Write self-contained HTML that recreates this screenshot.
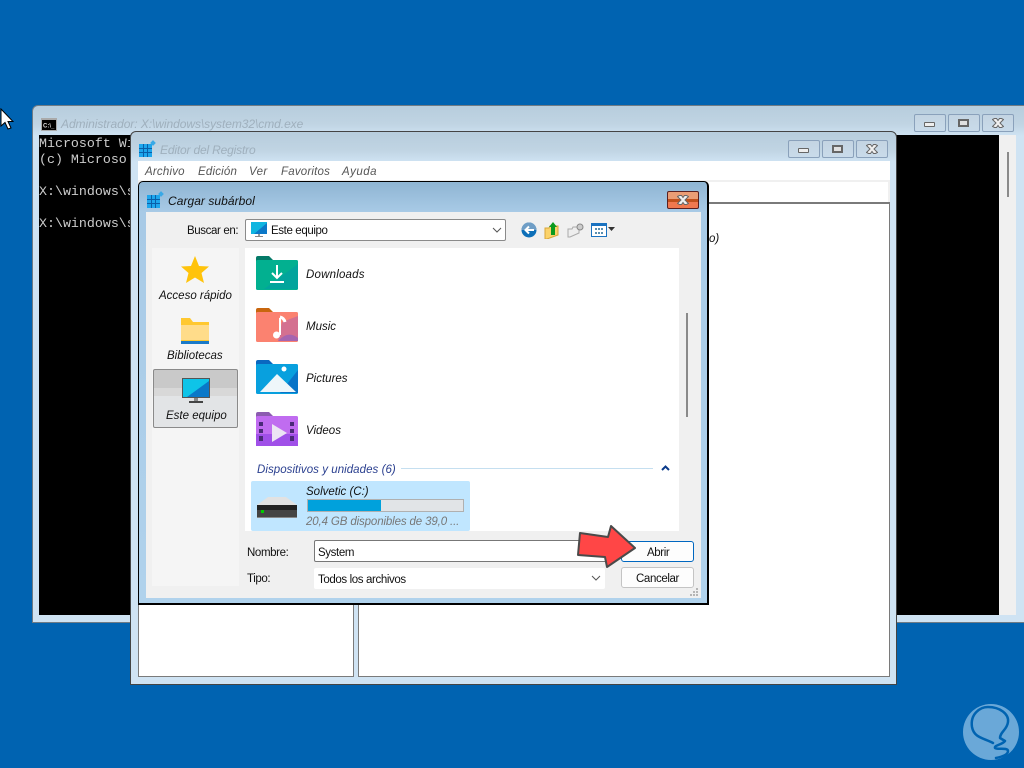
<!DOCTYPE html>
<html><head><meta charset="utf-8"><style>
html,body{margin:0;padding:0}
body{width:1024px;height:768px;overflow:hidden;position:relative;background:#0063b1;font-family:"Liberation Sans",sans-serif;font-size:11.5px;color:#111}
div,span,svg,b{position:absolute;box-sizing:border-box}
.t{white-space:nowrap;line-height:14px;margin-top:1px;letter-spacing:-.38px}
.i{font-style:italic;font-size:11.5px;letter-spacing:0}
.m{color:#555;letter-spacing:.2px}
.h{margin-top:0;font-size:12px}
.win{background:linear-gradient(#b7cddd 0,#c0d4e3 18px,#cfe3f3 30px,#cfe3f3 100%);border:1px solid #6f7b85;border-radius:6px 6px 0 0}
.cap{width:32px;height:18px;border:1px solid #8aa1bb;border-radius:2px;background:linear-gradient(#c3d4e2,#c9dbea)}
.cap span{left:9px;top:7px;width:11px;height:5px;background:#eee;border:1px solid #666;border-radius:1px}
.cap b{left:9px;top:4px;width:11px;height:8px;border:2px solid #666;background:#e0e0e0}
.x{left:9px;top:3px}
.mono{font-family:"Liberation Mono",monospace;font-size:13.3px;color:#ccc;line-height:16px;white-space:pre}
</style></head><body>
<!-- cursor -->
<svg style="left:0;top:108px" width="14" height="24" viewBox="0 0 14 24"><path d="M1 1V18L5 14.500L8 21L11 20L8 13.500H13Z" fill="#fff" stroke="#000"/></svg>

<!-- CMD -->
<div class="win" style="left:32px;top:105px;width:998px;height:518px"></div>
<svg style="left:41px;top:118px" width="16" height="13"><rect width="16" height="13" fill="#aaa"/><rect x="1" y="2" width="14" height="10" fill="#000"/><text x="2" y="9.500" font-family="Liberation Sans" font-size="6" font-weight="bold" fill="#ddd">C:\_</text></svg>
<div class="t i h" style="left:61px;top:117px;color:#9fb0bd;letter-spacing:-.06px">Administrador: X:\windows\system32\cmd.exe</div>
<div style="left:39px;top:135px;width:960px;height:480px;background:#000"></div>
<div style="left:999px;top:135px;width:17px;height:480px;background:#f0f0f0"></div>
<div style="left:1007px;top:152px;width:2px;height:45px;background:#8a8a8a"></div>
<div class="mono" style="left:39px;top:136px">Microsoft Wi
(c) Microso

X:\windows\s

X:\windows\s</div>
<div class="cap" style="left:914px;top:114px"><span></span></div>
<div class="cap" style="left:948px;top:114px"><b></b></div>
<div class="cap" style="left:982px;top:114px"><svg class="x" width="12" height="10"><path d="M.5 1.500L2.500.5H4.500L6 2.500L7.500.5H9.500L11.500 1.500L8 5L11.500 8.500L9.500 9.500H7.500L6 7.500L4.500 9.500H2.500L.5 8.500L4 5Z" fill="#f0f0f0" stroke="#666"/></svg></div>

<!-- Registry -->
<div class="win" style="left:130px;top:131px;width:767px;height:554px;border-color:#444"></div>
<svg style="left:139px;top:140px" width="17" height="17"><rect y="4" width="13" height="13" fill="#1ea6ec"/><path d="M0 8.500H13M0 12.500H13M4.500 4V17M8.500 4V17" stroke="#0a5fa8"/><rect x="12" y="1" width="4" height="4" fill="#39a9e6" transform="rotate(45 14 3)"/></svg>
<div class="t i h" style="left:160px;top:143px;color:#9fb0bd;letter-spacing:-.17px">Editor del Registro</div>
<div class="cap" style="left:788px;top:140px"><span></span></div>
<div class="cap" style="left:822px;top:140px"><b></b></div>
<div class="cap" style="left:856px;top:140px"><svg class="x" width="12" height="10"><path d="M.5 1.500L2.500.5H4.500L6 2.500L7.500.5H9.500L11.500 1.500L8 5L11.500 8.500L9.500 9.500H7.500L6 7.500L4.500 9.500H2.500L.5 8.500L4 5Z" fill="#f0f0f0" stroke="#666"/></svg></div>
<div style="left:138px;top:161px;width:752px;height:19px;background:#fff"></div>
<div class="t i m" style="left:145px;top:164px;letter-spacing:.2px">Archivo</div>
<div class="t i m" style="left:198px;top:164px">Edición</div>
<div class="t i m" style="left:249px;top:164px;letter-spacing:.35px">Ver</div>
<div class="t i m" style="left:281px;top:164px">Favoritos</div>
<div class="t i m" style="left:342px;top:164px;letter-spacing:.5px">Ayuda</div>
<div style="left:138px;top:180px;width:752px;height:22px;background:#fff;border:2px solid #f0f0f0;border-bottom:0"></div>
<div style="left:138px;top:202px;width:216px;height:475px;background:#fff;border:1px solid #7a7a7a"></div>
<div style="left:358px;top:202px;width:532px;height:475px;background:#fff;border:1px solid #7a7a7a;border-top-width:2px"></div>
<div class="t i" style="left:709px;top:231px">o)</div>

<!-- Dialog -->
<div style="left:138px;top:181px;width:571px;height:424px;background:linear-gradient(#8fb5d3 0,#a8cae6 30px,#b0d2ec 100%);border:1px solid #000;border-width:1px 2px 2px 1px;border-radius:5px 5px 0 0"></div>
<svg style="left:147px;top:191px" width="17" height="17"><rect y="4" width="13" height="13" fill="#1ea6ec"/><path d="M0 8.500H13M0 12.500H13M4.500 4V17M8.500 4V17" stroke="#0a5fa8"/><rect x="12" y="1" width="4" height="4" fill="#39a9e6" transform="rotate(45 14 3)"/></svg>
<div class="t i h" style="left:168px;top:194px;letter-spacing:.05px">Cargar subárbol</div>
<div style="left:667px;top:191px;width:32px;height:18px;border:1px solid #5a2020;border-radius:2px;background:linear-gradient(#ea9d75 0 7px,#c0501c 7px 10px,#f0784f 10px)"><svg class="x" style="left:9px;top:3px" width="12" height="10"><path d="M.5 1.500L2.500.5H4.500L6 2.500L7.500.5H9.500L11.500 1.500L8 5L11.500 8.500L9.500 9.500H7.500L6 7.500L4.500 9.500H2.500L.5 8.500L4 5Z" fill="#f0f0f0" stroke="#666"/></svg></div>
<div style="left:146px;top:212px;width:555px;height:386px;background:#f0f0f0"></div>

<div class="t" style="left:187px;top:223px">Buscar en:</div>
<div style="left:245px;top:219px;width:261px;height:22px;background:#fff;border:1px solid #8a8a8a;border-radius:2px"></div>
<svg style="left:251px;top:222px" width="17" height="17"><rect width="16" height="12" fill="#0fb5e0"/><path d="M16 1V12H3Z" fill="#0b78c8"/><rect x="7" y="12" width="2" height="2" fill="#999"/><rect x="4" y="14" width="8" height="1" fill="#888"/></svg>
<div class="t" style="left:271px;top:223px">Este equipo</div>
<svg style="left:492px;top:226px" width="10" height="8"><path d="M1 2L5 6L9 2" fill="none" stroke="#555"/></svg>
<svg style="left:521px;top:222px" width="16" height="16"><circle cx="8" cy="8" r="7.500" fill="#0d6fb8"/><path d="M0.500 8A7.500 7.500 0 0 1 15.500 8" fill="#6f9ec6"/><path d="M13 8H5M8 4.500L4.500 8L8 11.500" fill="none" stroke="#fff" stroke-width="2"/></svg>
<svg style="left:544px;top:221px" width="16" height="18"><path d="M1 7H5L6 5H14V14L3 18H1Z" fill="#fbd36b" stroke="#d9a63a"/><path d="M9 1L13 6H11V14H7V6H5Z" fill="#0a9a1e"/></svg>
<svg style="left:567px;top:223px" width="17" height="15"><path d="M1 6H5L6 4H12V10L3 14H1Z" fill="#eee" stroke="#aaa"/><circle cx="13" cy="4" r="3" fill="#ccc" stroke="#888"/></svg>
<svg style="left:591px;top:223px" width="26" height="15"><rect x=".5" y=".5" width="15" height="13" fill="#fff" stroke="#1a72c0"/><rect x="1" y="1" width="14" height="2" fill="#1a72c0"/><path d="M4 5h2v2H4zM7 5h2v2H7zM10 5h2v2h-2zM4 9h2v2H4zM7 9h2v2H7zM10 9h2v2h-2z" fill="#5a8fb0"/><path d="M17 4h7l-3.500 4z" fill="#333"/></svg>

<!-- places -->
<div style="left:152px;top:248px;width:87px;height:338px;background:#f5f5f5"></div>
<div style="left:153px;top:369px;width:85px;height:59px;border:1px solid #8a8a8a;border-radius:2px;background:linear-gradient(#c9c9c9 0 18px,#d8d8d8 18px 26px,#e2e4e6 26px)"></div>
<svg style="left:180px;top:255px" width="30" height="30"><path d="M15 1L19 11L29 11.500L21.500 18L24 28L15 22.500L6 28L8.500 18L1 11.500L11 11Z" fill="#ffc30b"/></svg>
<div class="t i" style="left:159px;top:288px">Acceso rápido</div>
<svg style="left:181px;top:318px" width="28" height="26"><path d="M0 0H9L12 4H28V26H0Z" fill="#ffc830"/><path d="M0 7H28V22H0Z" fill="#ffdc8a"/><path d="M0 23H28V26H0Z" fill="#1a7ac8"/></svg>
<div class="t i" style="left:167px;top:348px">Bibliotecas</div>
<svg style="left:182px;top:378px" width="28" height="26"><rect width="28" height="20" fill="#555"/><rect x="1" y="1" width="26" height="18" fill="#0ec4e8"/><path d="M27 3V19H5Z" fill="#0a78c8"/><rect x="12" y="20" width="4" height="3" fill="#888"/><rect x="7" y="23" width="14" height="2" fill="#444"/></svg>
<div class="t i" style="left:166px;top:408px">Este equipo</div>

<!-- list -->
<div style="left:245px;top:248px;width:434px;height:283px;background:#fff"></div>
<div style="left:686px;top:313px;width:2px;height:104px;background:#8a8a8a"></div>

<svg style="left:256px;top:256px" width="42" height="34"><path d="M0 2Q0 0 2 0H13L17 4H30V12H0Z" fill="#047a68"/><rect y="4" width="42" height="30" rx="1.500" fill="#02b090"/><path d="M42 8V33H8Z" fill="#02a49c"/><path d="M21 9V22M16 17L21 22L26 17M14 26H28" fill="none" stroke="#fff" stroke-width="2"/></svg>
<div class="t i" style="left:306px;top:267px;letter-spacing:.2px">Downloads</div>

<svg style="left:256px;top:308px" width="42" height="34"><path d="M0 2Q0 0 2 0H13L17 4H30V12H0Z" fill="#c8660e"/><rect y="4" width="42" height="30" rx="1.500" fill="#fb8270"/><path d="M42 8V33H22L26 14Z" fill="#d47090"/><path d="M22 33Q32 22 42 30V33Z" fill="#a565b0"/><path d="M24 10V27" stroke="#fff" stroke-width="2"/><path d="M24 9Q28 10 29 14" fill="none" stroke="#fff" stroke-width="3"/><circle cx="20.500" cy="27" r="3.500" fill="#fff"/></svg>
<div class="t i" style="left:306px;top:319px">Music</div>

<svg style="left:256px;top:360px" width="42" height="34"><path d="M0 2Q0 0 2 0H13L17 4H30V12H0Z" fill="#0a68c0"/><rect y="4" width="42" height="30" rx="1.500" fill="#08a0de"/><path d="M42 10V33H24Z" fill="#0874c8"/><path d="M4 32L21 14L40 32Z" fill="#eef6fa"/><circle cx="28" cy="9" r="2.500" fill="#fff"/></svg>
<div class="t i" style="left:306px;top:371px">Pictures</div>

<svg style="left:256px;top:412px" width="42" height="34"><path d="M0 2Q0 0 2 0H13L17 4H30V12H0Z" fill="#8c5cb0"/><rect y="4" width="42" height="30" rx="1.500" fill="#c06cf0"/><path d="M0 34V22H42V34Z" fill="#a050e8"/><path d="M16 12V30L31 21Z" fill="#ece4f4"/><path d="M3 10h4v4H3zM3 17h4v4H3zM3 24h4v5H3zM34 10h4v4h-4zM34 17h4v4h-4zM34 24h4v5h-4z" fill="#4a2a78"/></svg>
<div class="t i" style="left:306px;top:423px">Videos</div>

<div class="t i" style="left:257px;top:462px;color:#2a3f8f;letter-spacing:.05px">Dispositivos y unidades (6)</div>
<div style="left:401px;top:468px;width:252px;height:1px;background:#c5dff0"></div>
<svg style="left:661px;top:465px" width="9" height="7"><path d="M1 5L4.500 1.500L8 5" fill="none" stroke="#0a3a8a" stroke-width="2"/></svg>
<div style="left:251px;top:481px;width:219px;height:50px;background:#c0e6ff;border-radius:2px"></div>
<svg style="left:256px;top:495px" width="42" height="24"><path d="M1 10L12 2H30L41 10Z" fill="#e2e2e2"/><rect x="1" y="10" width="40" height="5" fill="#222"/><rect x="1" y="15" width="40" height="7" fill="#444"/><rect x="1" y="22" width="40" height="1" fill="#888"/><rect x="5" y="15" width="3" height="3" fill="#0c0"/></svg>
<div class="t i" style="left:306px;top:484px">Solvetic (C:)</div>
<div style="left:307px;top:499px;width:157px;height:13px;background:#e1e4e7;border:1px solid #b0b0b0"></div>
<div style="left:308px;top:500px;width:73px;height:11px;background:#00a1dc"></div>
<div class="t i" style="left:306px;top:514px;color:#777;letter-spacing:-.13px">20,4 GB disponibles de 39,0 ...</div>

<!-- bottom -->
<div class="t" style="left:247px;top:545px">Nombre:</div>
<div style="left:314px;top:540px;width:300px;height:22px;background:#fff;border:1px solid #777;border-radius:2px"></div>
<div class="t" style="left:318px;top:545px">System</div>
<div class="t" style="left:247px;top:571px">Tipo:</div>
<div style="left:314px;top:568px;width:291px;height:21px;background:#fff;border-radius:2px"></div>
<div class="t" style="left:318px;top:572px">Todos los archivos</div>
<svg style="left:591px;top:574px" width="10" height="8"><path d="M1 2L5 6L9 2" fill="none" stroke="#555"/></svg>
<div style="left:621px;top:541px;width:73px;height:21px;background:#fdfdfd;border:1px solid #0067c0;border-radius:3px"></div>
<div class="t" style="left:647px;top:545px">Abrir</div>
<div style="left:621px;top:567px;width:73px;height:21px;background:#fdfdfd;border:1px solid #c4c4c4;border-radius:3px"></div>
<div class="t" style="left:636px;top:571px">Cancelar</div>
<svg style="left:689px;top:587px" width="10" height="9"><path d="M7 1h2v2H7zM4 4h2v2H4zM7 4h2v2H7zM1 7h2v2H1zM4 7h2v2H4zM7 7h2v2H7z" fill="#b5b5b5"/></svg>

<!-- arrow -->
<svg style="left:576px;top:524px" width="62" height="46"><path d="M4 9L32 13L35 2L59 24L31 43L29 33L2 31Z" fill="#ff4646" stroke="#4a4a4a" stroke-width="2" stroke-linejoin="round"/></svg>

<!-- logo -->
<svg style="left:960px;top:700px" width="64" height="68"><circle cx="31" cy="32" r="28" fill="#6aa8d8"/><path d="M33 43C24 38 14 38 12 27C10 14 20 7 28 7C40 7 49 14 48 22C47 30 40 32 40 38L45 41C42 45 34 45 35 48C37 50 48 47 48 51C48 55 41 57 36 58" fill="none" stroke="#0063b1" stroke-width="2.500" stroke-linecap="round" stroke-linejoin="round"/></svg>
</body></html>
